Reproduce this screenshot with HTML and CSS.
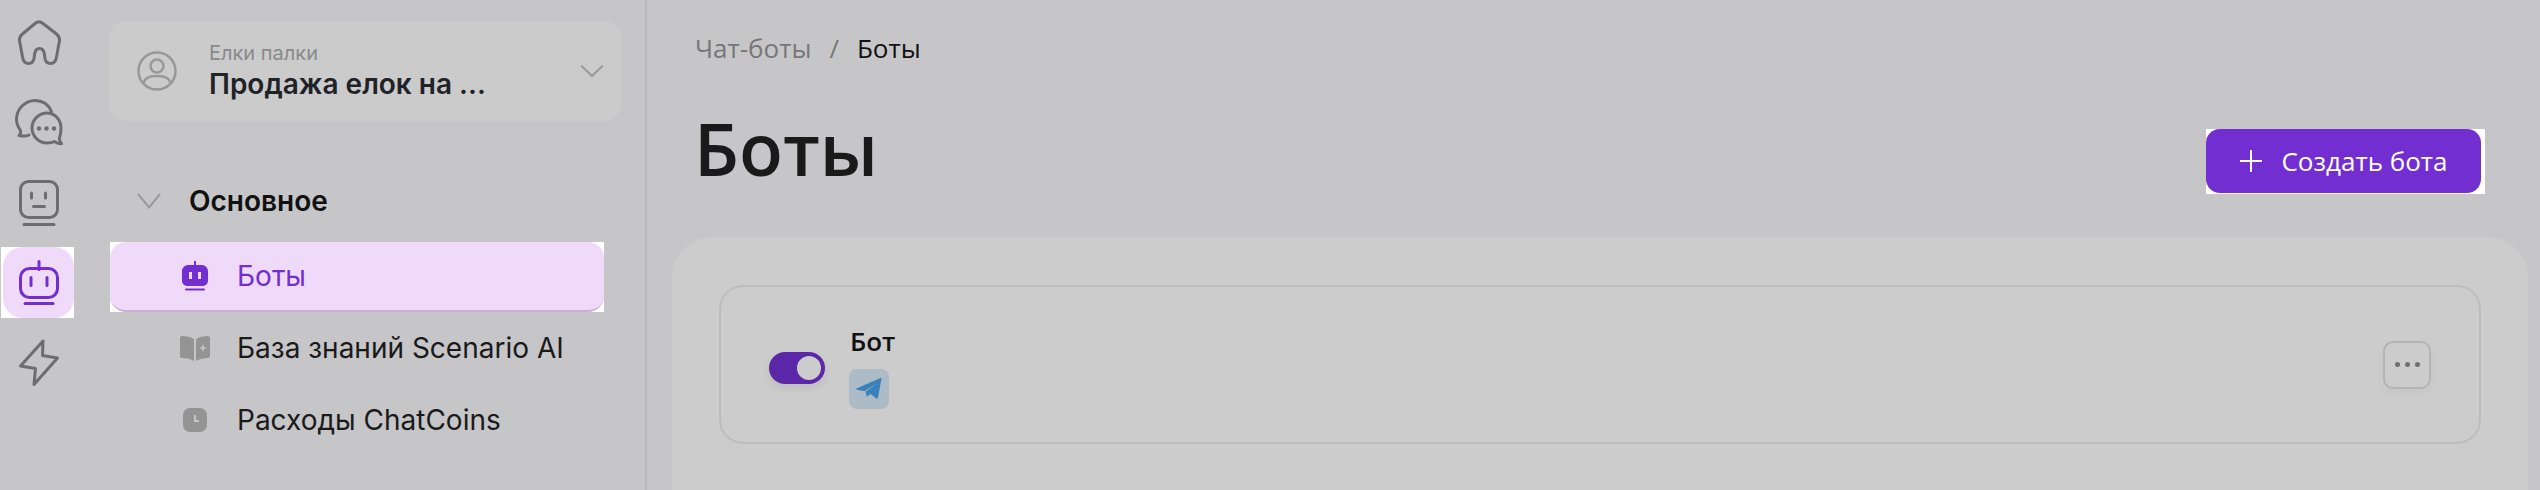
FILE: index.html
```html
<!DOCTYPE html>
<html lang="ru">
<head>
  <meta charset="UTF-8" />
  <title>Боты</title>
  <link rel="stylesheet" href="styles.css">
</head>
<body>
  <div class="app">
    <nav class="rail">
      <a class="rail-item">
        <svg width="46" height="45" viewBox="0 0 46 45" fill="none" stroke="#6d6d6e" stroke-width="3" stroke-linejoin="round" stroke-linecap="round"><path d="M19 3.500c3-2.500 5-2.500 8 0l13.500 10.500c2.500 2 3.300 4 3 6.500l-3 16.500c-.6 3.800-2.800 6.500-6 6.500s-5-2-5.500-5l-.7-5c-.6-3.500-2.500-5-4.800-5s-4.200 1.500-4.800 5l-.7 5c-.5 3-2.300 5-5.500 5s-5.400-2.700-6-6.500l-3-16.500c-.3-2.500.5-4.500 3-6.500z"/></svg>
      </a>
      <a class="rail-item">
        <svg width="48" height="48" viewBox="0 0 48 48" fill="none" stroke="#6d6d6e" stroke-width="3" stroke-linejoin="round" stroke-linecap="round"><path d="M14 36c-2 1-5 1.500-10 .5 1.500-1.500 2-3 1.500-5C3 28 1.500 24 1.500 20.500 1.500 10 10 1.500 20 1.500c7.500 0 13.500 4 16.500 11"/><path d="M46 29c0-8-6-15-14-15s-15 6.500-15 15c0 8 6.500 15 15 15 3 0 5.500-.5 7.500-1.500 2 1.500 4.500 2.500 7 2-1.500-1.500-2.300-3.500-2-5.500C45.500 36 46 33 46 29z"/><g fill="#6d6d6e" stroke="none"><circle cx="24" cy="29.500" r="2.200"/><circle cx="31.500" cy="29.500" r="2.200"/><circle cx="39" cy="29.500" r="2.200"/></g></svg>
      </a>
      <a class="rail-item">
        <svg width="42" height="46" viewBox="0 0 42 46" fill="none" stroke="#6d6d6e" stroke-width="3" stroke-linecap="round"><rect x="2.500" y="1.500" width="37" height="36" rx="8"/><path d="M13.500 13v5M27.500 13v5M15.500 26.500h11"/><path d="M6 44.500h30"/></svg>
      </a>
      <div class="highlight highlight-rail">
        <a class="rail-item rail-item-active">
          <svg width="40" height="45" viewBox="0 0 40 45" fill="none" stroke="#722ed1" stroke-width="3" stroke-linecap="round"><path d="M20 1.500v8"/><rect x="1.500" y="8.500" width="37" height="29" rx="9"/><path d="M12 17.500v8M28 17.500v8M6 43.500h28"/></svg>
        </a>
      </div>
      <a class="rail-item">
        <svg width="42" height="48" viewBox="0 0 42 48" fill="none" stroke="#6d6d6e" stroke-width="3" stroke-linejoin="round"><path d="M25 2 2.500 27l15 2.500L16 45.500 39.500 19l-15-2.500z"/></svg>
      </a>
    </nav>

    <aside class="sidebar">
      <div class="project">
        <svg class="project-avatar" width="40" height="40" viewBox="0 0 40 40" fill="none" stroke="#989899" stroke-width="2.500"><circle cx="20" cy="20" r="18.500"/><circle cx="20" cy="15" r="6.500"/><path d="M6.500 32c1-5 6-7 13.500-7s12.500 2 13.500 7"/></svg>
        <div class="project-text">
          <div class="project-org">Елки палки</div>
          <div class="project-name">Продажа елок на ...</div>
        </div>
        <svg class="project-arrow" width="24" height="14" viewBox="0 0 24 14" fill="none" stroke="#9a9a9b" stroke-width="2"><path d="M1 1.500 12 12 23 1.500"/></svg>
      </div>

      <div class="menu-group">
        <svg width="24" height="16" viewBox="0 0 24 16" fill="none" stroke="#9a9a9b" stroke-width="2"><path d="M1 1 12 14.500 23 1"/></svg>
        <span>Основное</span>
      </div>

      <div class="highlight highlight-menu">
        <a class="menu-item menu-item-active">
          <span class="menu-icon">
            <svg width="26" height="30" viewBox="0 0 26 30"><path d="M13 .5v5" stroke="#722ed1" stroke-width="2" stroke-linecap="round"/><path fill="#722ed1" fill-rule="evenodd" d="M6 4h14c3 0 6 3 6 6v10c0 3-3 5-6 5H6c-3 0-6-2-6-5V10c0-3 3-6 6-6zM7 11v7h3v-7zm9 0v7h3v-7z"/><path d="M4 28.500h18" stroke="#722ed1" stroke-width="2" stroke-linecap="round"/></svg>
          </span>
          <span>Боты</span>
        </a>
      </div>
      <a class="menu-item">
        <span class="menu-icon">
          <svg width="30" height="26" viewBox="0 0 30 26" fill="#949495"><path fill-rule="evenodd" d="M0 3c0-1 1-2 2-2 4 0 9 1 12 3v22c-3-2-8-3-12-3-1 0-2-1-2-2zM16 4c3-2 8-3 12-3 1 0 2 1 2 2v18c0 1-1 2-2 2-4 0-9 1-12 3zm7 5-1 3-3 1 3 1 1 3 1-3 3-1-3-1z"/></svg>
        </span>
        <span>База знаний Scenario AI</span>
      </a>
      <a class="menu-item">
        <span class="menu-icon">
          <svg width="24" height="24" viewBox="0 0 24 24"><rect width="24" height="24" rx="7" fill="#949495"/><path d="M12 7v6h4" fill="none" stroke="#c6c6c8" stroke-width="2"/></svg>
        </span>
        <span>Расходы ChatCoins</span>
      </a>
    </aside>

    <main class="main">
      <div class="breadcrumbs">
        <span class="crumb">Чат-боты</span>
        <span class="crumb">/</span>
        <span class="crumb-current">Боты</span>
      </div>
      <div class="page-head">
        <h1>Боты</h1>
        <div class="highlight highlight-btn">
          <button class="btn-create">
            <svg width="24" height="24" viewBox="0 0 24 24" stroke="#fff" stroke-width="2"><path d="M12 1v22M1 12h22"/></svg>
            Создать бота
          </button>
        </div>
      </div>
      <section class="panel">
        <div class="bot-card">
          <div class="toggle"><div class="toggle-knob"></div></div>
          <div class="bot-info">
            <div class="bot-name">Бот</div>
            <div class="bot-channel">
              <svg width="26" height="21" viewBox="0 0 26 21"><path fill="#3a80bb" d="M25.500.6 22 19.800c-.2 1-1 1.200-1.700.7L14.500 16l-3.800 2.800-1-5 11-8.300L8.500 13.200 1 11.700c-1-.3-1-1 0-1.400L24.500 0c.7-.2 1.100 0 1 .6z"/></svg>
            </div>
          </div>
          <button class="bot-more"><i></i><i></i><i></i></button>
        </div>
      </section>
    </main>
  </div>
</body>
</html>
```

FILE: styles.css
```css
* {
  box-sizing: border-box;
}

html, body {
  margin: 0;
  height: 100%;
  overflow: hidden;
}

body {
  font-family: 'Inter', sans-serif;
  background: #c6c6c8;
  color: #1a1a1a;
}

.app {
  display: flex;
  height: 490px;
}

/* white corners show behind the highlighted, rounded items */
.highlight {
  background: #fff;
}

.highlight-rail {
  width: 73px;
  margin-bottom: 9px;
  padding-left: 2px;
}

.highlight-menu {
  width: 494px;
  margin-left: 1px;
}

.highlight-btn {
  height: 65px;
  margin-top: 57px;
  padding-right: 4px;
}

.rail {
  width: 109px;
  flex-shrink: 0;
  padding: 7px 0 0 1px;
  display: flex;
  flex-direction: column;
}

.rail-item {
  width: 73px;
  height: 71px;
  margin-bottom: 9px;
  padding-left: 3px;
  display: flex;
  align-items: center;
  justify-content: center;
}

.rail-item-active {
  width: 71px;
  margin-bottom: 0;
  padding-left: 1px;
  background: #f0dafa;
  border-radius: 20px;
}

.sidebar {
  width: 538px;
  flex-shrink: 0;
  padding: 21px 0 0;
  border-right: 2px solid #b7b7b9;
}

.project {
  width: 512px;
  height: 100px;
  background: #cbcbcc;
  border-radius: 16px;
  display: flex;
  align-items: center;
  padding: 0 17px 0 28px;
}

.project-avatar {
  flex-shrink: 0;
}

.project-text {
  margin: -3px 0 0 32px;
  flex: 1;
}

.project-org {
  font-size: 20px;
  line-height: 28px;
  color: #89898a;
}

.project-name {
  font-size: 28px;
  line-height: 34px;
  font-weight: 600;
  color: #1f2227;
}

.menu-group {
  height: 60px;
  margin-top: 50px;
  margin-bottom: 11px;
  display: flex;
  align-items: center;
  padding-left: 28px;
  font-size: 28px;
  font-weight: 600;
  color: #111;
}

.menu-group span {
  margin-left: 28px;
}

.menu-item {
  width: 494px;
  height: 72px;
  margin-left: 1px;
  display: flex;
  align-items: center;
  font-size: 28px;
  color: #1a1a1a;
}

.menu-icon {
  width: 30px;
  margin-left: 70px;
  margin-right: 27px;
  display: flex;
  justify-content: center;
  flex-shrink: 0;
}

.menu-item-active {
  height: 70px;
  margin-left: 0;
  background: #f0dafa;
  border-radius: 16px;
  border-bottom: 2px solid #c9b0d4;
  color: #722ed1;
}

.main {
  flex: 1;
  padding: 0 0 0 25px;
  min-width: 0;
  display: flex;
  flex-direction: column;
}

.breadcrumbs {
  padding: 32px 0 0 23px;
  height: 72px;
  font-family: 'Open Sans', sans-serif;
  font-size: 26px;
  line-height: 32px;
  display: flex;
  gap: 18px;
}

.crumb {
  color: #767677;
}

.crumb-current {
  color: #111;
}

.page-head {
  height: 165px;
  display: flex;
  justify-content: space-between;
  align-items: flex-start;
  padding: 0 55px 0 22px;
}

.page-head h1 {
  margin: 29px 0 0;
  font-family: 'Open Sans', sans-serif;
  font-size: 72px;
  line-height: 94px;
  font-weight: 600;
  color: #1a1a1a;
}

.btn-create {
  width: 275px;
  height: 64px;
  padding: 0;
  border: none;
  border-radius: 14px;
  background: #722ed1;
  color: #fff;
  font-family: 'Open Sans', sans-serif;
  font-size: 26px;
  display: flex;
  align-items: center;
  justify-content: center;
  gap: 18px;
}

.panel {
  flex: 1;
  margin-right: 12px;
  background: #cccccc;
  border-radius: 40px 40px 0 0;
  padding: 48px 47px 0;
}

.bot-card {
  height: 159px;
  border: 2px solid #bdbdbd;
  border-radius: 24px;
  display: flex;
  align-items: center;
  padding: 0 48px;
}

.toggle {
  width: 56px;
  height: 32px;
  margin-top: 7px;
  border-radius: 16px;
  background: #5b26a7;
  padding: 4px;
  display: flex;
  justify-content: flex-end;
  box-shadow: 0 4px 8px rgba(0, 0, 0, 0.08);
}

.toggle-knob {
  width: 24px;
  height: 24px;
  border-radius: 50%;
  background: #cccccc;
}

.bot-info {
  margin-left: 24px;
  margin-top: 4px;
  flex: 1;
}

.bot-name {
  font-family: 'Open Sans', sans-serif;
  font-size: 26px;
  line-height: 32px;
  font-weight: 600;
  color: #111;
  margin: 0 0 12px 1px;
}

.bot-channel {
  width: 40px;
  height: 40px;
  border-radius: 8px;
  background: #adbbc7;
  display: flex;
  align-items: center;
  justify-content: center;
}

.bot-more {
  width: 48px;
  height: 48px;
  padding: 0;
  background: none;
  border: 2px solid #b4b4b4;
  border-radius: 10px;
  box-shadow: 0 4px 8px rgba(0, 0, 0, 0.03);
  display: flex;
  align-items: center;
  justify-content: center;
  gap: 5px;
}

.bot-more i {
  width: 5px;
  height: 5px;
  border-radius: 50%;
  background: #707071;
}
```
